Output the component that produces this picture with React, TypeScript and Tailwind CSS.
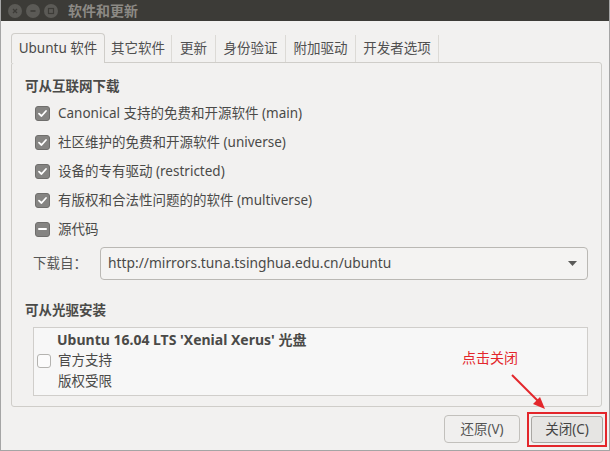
import React from 'react';

const FONT = '"Noto Sans", "Noto Sans CJK SC", sans-serif';

const TABS = [
  { label: '其它软件', w: 'w-[67px]' },
  { label: '更新', w: 'w-[44px]' },
  { label: '身份验证', w: 'w-[70px]' },
  { label: '附加驱动', w: 'w-[70px]' },
  { label: '开发者选项', w: 'w-[83px]' },
];

const SOURCES = [
  { label: 'Canonical 支持的免费和开源软件 (main)', state: 'on' },
  { label: '社区维护的免费和开源软件 (universe)', state: 'on' },
  { label: '设备的专有驱动 (restricted)', state: 'on' },
  { label: '有版权和合法性问题的的软件 (multiverse)', state: 'on' },
  { label: '源代码', state: 'mixed' },
];

const Check = ({ state }: { state: string }) => {
  if (state === 'off') {
    return <span className="block h-[14px] w-[14px] rounded-[3px] border border-[#b4b3b0] bg-[#fbfbfb]" />;
  }
  return (
    <span className="grid h-[15px] w-[15px] place-items-center rounded-[3px] border border-[#6f6e6c] bg-[#858482]">
      {state === 'on' ? (
        <svg width="11" height="11" viewBox="0 0 11 11">
          <path d="M2 5.6 L4.5 8 L9 3" fill="none" stroke="#fff" strokeWidth="1.8" strokeLinecap="round" strokeLinejoin="round" />
        </svg>
      ) : (
        <span className="block h-[2px] w-[9px] rounded bg-white" />
      )}
    </span>
  );
};

const WinButton = ({ glyph }: { glyph: 'x' | '-' | 'o' }) => (
  <span className="grid h-[14px] w-[14px] place-items-center rounded-full bg-[#5b5a56]">
    <svg width="8" height="8" viewBox="0 0 8 8">
      {glyph === 'x' && <path d="M2 2 L6 6 M6 2 L2 6" stroke="#3c3b37" strokeWidth="1.3" />}
      {glyph === '-' && <path d="M1.5 4 H6.5" stroke="#3c3b37" strokeWidth="1.6" />}
      {glyph === 'o' && <rect x="1.5" y="1.5" width="5" height="5" fill="none" stroke="#3c3b37" strokeWidth="1.2" />}
    </svg>
  </span>
);

export default function App() {
  return (
    <div
      className="relative flex h-[451px] w-[610px] flex-col overflow-hidden border-x border-b border-[#a5a5a5] bg-[#f2f1f0] text-[13.5px] text-[#4a4a48]"
      style={{ fontFamily: FONT }}
    >
      {/* title bar */}
      <div className="flex h-[21px] shrink-0 items-center bg-[#3c3b37] pl-[7px]">
        <div className="flex gap-[4px]">
          <WinButton glyph="x" />
          <WinButton glyph="-" />
          <WinButton glyph="o" />
        </div>
        <span className="ml-[10px] text-[14px] font-bold leading-none text-[#8c8a85]">软件和更新</span>
      </div>

      {/* notebook */}
      <div className="flex flex-col px-[10px] pt-[12px]">
        <div className="flex h-[29px] items-end">
          <div className="relative z-10 -mb-px flex h-[30px] w-[94px] items-center justify-center rounded-t-[4px] border border-b-0 border-[#cfcdc9] bg-[#f2f1f0]">
            Ubuntu 软件
          </div>
          {TABS.map((t) => (
            <div key={t.label} className={`flex h-[27px] items-center justify-center border-r border-[#dcdad6] text-[#505050] ${t.w}`}>
              {t.label}
            </div>
          ))}
        </div>

        <div className="flex h-[345px] w-[591px] flex-col rounded-[3px] border border-[#cfcdc9] px-[13px] pt-[14px]">
          <div className="font-bold leading-[18px]">可从互联网下载</div>
          <div className="mt-[9px] flex flex-col gap-[11px] pl-[10px]">
            {SOURCES.map((s) => (
              <div key={s.label} className="flex h-[18px] items-center gap-[8px]">
                <Check state={s.state} />
                <span>{s.label}</span>
              </div>
            ))}
          </div>

          <div className="mt-[9px] flex items-center pl-[8px]">
            <span className="w-[67px] text-[#555]">下载自：</span>
            <div className="flex h-[33px] flex-1 items-center justify-between rounded-[4px] border border-[#bab8b4] bg-[#f4f3f2] pl-[7px] pr-[10px]">
              <span className="text-[13.8px]">http://mirrors.tuna.tsinghua.edu.cn/ubuntu</span>
              <svg width="9" height="6" viewBox="0 0 9 6">
                <path d="M0 0 H9 L4.5 5 Z" fill="#5a5a58" />
              </svg>
            </div>
          </div>

          <div className="mt-[21px] font-bold leading-[18px]">可从光驱安装</div>
          <div className="mt-[8px] ml-[8px] flex h-[69px] flex-col border border-[#d0cecb] bg-[#f7f7f7] pl-[3px] pt-[2px]">
            <div className="pl-[20px] text-[14px] font-bold leading-[20px]">Ubuntu 16.04 LTS 'Xenial Xerus' 光盘</div>
            <div className="flex items-center gap-[7px] leading-[21px]">
              <Check state="off" />
              <span>官方支持</span>
            </div>
            <div className="pl-[21px] leading-[20px]">版权受限</div>
          </div>
        </div>
      </div>

      {/* buttons */}
      <div className="flex justify-end gap-[7px] pr-[2px] pt-[5px]">
        <button className="mt-[3px] h-[28px] w-[76px] rounded-[4px] border border-[#c2c0bc] bg-[#f0efee] text-[#555]">还原(V)</button>
        <div className="border-2 border-[#e3262b] p-[2px]">
          <button className="h-[27px] w-[72px] rounded-[3px] border border-[#a9a7a3] bg-[#e6e5e3] text-[#444]">关闭(C)</button>
        </div>
      </div>

      {/* annotation */}
      <span className="absolute left-[461px] top-[347px] text-[14px] text-[#e3262b]">点击关闭</span>
      <svg className="absolute left-[505px] top-[370px]" width="45" height="45" viewBox="0 0 45 45">
        <path d="M6 5 L34 33" stroke="#e3262b" strokeWidth="2" />
        <path d="M39 39 L27 34 L34 27 Z" fill="#e3262b" />
      </svg>
    </div>
  );
}
